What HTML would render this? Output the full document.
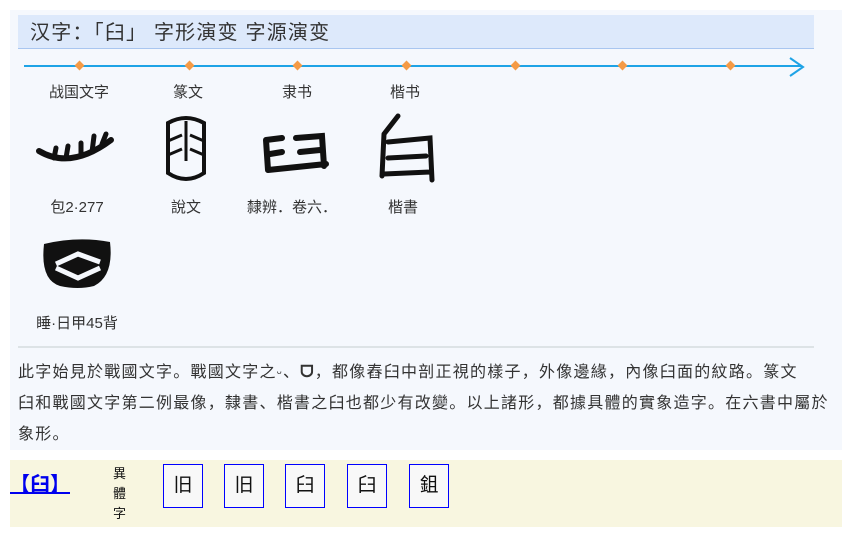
<!DOCTYPE html>
<html><head><meta charset="utf-8"><style>
*{margin:0;padding:0;box-sizing:border-box}
body{width:852px;height:538px;background:#fff;font-family:"Liberation Sans","Noto Sans CJK SC",sans-serif;color:#333;position:relative;overflow:hidden}
.abs{position:absolute}
#panel{left:10px;top:10px;width:832px;height:440px;background:#f5f8fd}
#title{left:18px;top:15px;width:796px;height:34px;background:#dde9fb;border-bottom:1px solid #a9c6f0;font-size:20px;line-height:36px;padding-left:12px;color:#333;letter-spacing:1.2px}
.lbl{font-size:15px;width:110px;text-align:center;color:#333}
.dot{width:7px;height:7px;background:#f59a45;transform:rotate(45deg)}
#txt{left:18px;top:357px;width:810px;font-size:16px;line-height:31px;color:#333;letter-spacing:1.25px;white-space:nowrap}
#band{left:10px;top:460px;width:832px;height:67px;background:#f8f6e0}
.box{top:464px;width:40px;height:44px;border:1px solid #0000ff;background:#f8f8f8;font-size:19px;text-align:center;line-height:42px;color:#111}
</style></head><body>
<div id="panel" class="abs"></div>
<div id="title" class="abs">汉字：「臼」 字形演变 字源演变</div>
<div class="abs" style="left:24px;top:65px;width:778px;height:2px;background:#1ea3e6"></div>
<svg class="abs" style="left:788px;top:56px" width="18" height="22"><path d="M2 2 L15 11 L2 20" fill="none" stroke="#1ea3e6" stroke-width="2"/></svg>
<div class="abs dot" style="left:76px;top:62px"></div>
<div class="abs dot" style="left:186px;top:62px"></div>
<div class="abs dot" style="left:294px;top:62px"></div>
<div class="abs dot" style="left:403px;top:62px"></div>
<div class="abs dot" style="left:512px;top:62px"></div>
<div class="abs dot" style="left:619px;top:62px"></div>
<div class="abs dot" style="left:727px;top:62px"></div>
<div class="abs lbl" style="left:24px;top:81px">战国文字</div>
<div class="abs lbl" style="left:133px;top:81px">篆文</div>
<div class="abs lbl" style="left:242px;top:81px">隶书</div>
<div class="abs lbl" style="left:350px;top:81px">楷书</div>
<svg class="abs" style="left:36px;top:128px" width="82" height="40"><path d="M3 23 Q35 42 75 12" fill="none" stroke="#111" stroke-width="6" stroke-linecap="round"/><path d="M20 20 L18 30 M32 18 L30 30 M45 15 L45 28 M58 8 L56 24 M70 6 L66 16" stroke="#111" stroke-width="5" stroke-linecap="round"/></svg>
<svg class="abs" style="left:160px;top:113px" width="52" height="72"><path d="M8 10 Q26 0 44 10 L44 60 Q26 72 8 60 Z" fill="none" stroke="#111" stroke-width="4"/><path d="M8 28 L22 22 M8 42 L22 36 M44 28 L30 22 M44 42 L30 36 M26 8 L26 48" fill="none" stroke="#111" stroke-width="3"/></svg>
<svg class="abs" style="left:260px;top:130px" width="72" height="48"><path d="M6 10 L22 8 M6 10 L8 40 M10 24 L22 22 M8 40 L66 34 M36 8 L62 6 L64 36 M40 22 L60 20" fill="none" stroke="#111" stroke-width="6" stroke-linecap="round"/></svg>
<svg class="abs" style="left:370px;top:112px" width="68" height="72"><path d="M28 4 L14 22 M14 22 L12 64 M18 30 L60 26 L62 68 M18 46 L56 44 M14 62 L60 60" fill="none" stroke="#111" stroke-width="5" stroke-linecap="round"/></svg>
<svg class="abs" style="left:38px;top:236px" width="78" height="56"><path d="M6 8 Q40 0 72 6 Q76 40 56 50 Q40 54 22 50 Q2 44 6 8 Z" fill="#111"/><path d="M18 28 L40 18 L62 26 M18 32 L40 42 L62 32" fill="none" stroke="#f5f8fd" stroke-width="5"/></svg>
<div class="abs lbl" style="left:22px;top:196px">包2·277</div>
<div class="abs lbl" style="left:131px;top:196px">說文</div>
<div class="abs lbl" style="left:237px;top:196px">隸辨．卷六．</div>
<div class="abs lbl" style="left:348px;top:196px">楷書</div>
<div class="abs lbl" style="left:22px;top:312px">睡·日甲45背</div>
<div class="abs" style="left:18px;top:346px;width:796px;height:2px;background:#dde3e6"></div>
<div id="txt" class="abs">此字始見於戰國文字。戰國文字之<span style="font-size:13px">ᵕ</span>、<b>ᗜ</b>，都像舂臼中剖正視的樣子，外像邊緣，內像臼面的紋路。篆文<br>臼和戰國文字第二例最像，隸書、楷書之臼也都少有改變。以上諸形，都據具體的實象造字。在六書中屬於<br>象形。</div>
<div id="band" class="abs"></div>
<div class="abs" style="left:10px;top:468px;font-size:20px;font-weight:bold;color:#0000ee;text-decoration:underline">【臼】</div>
<div class="abs" style="left:113px;top:464px;width:16px;font-size:13px;line-height:20px;color:#111">異<br>體<br>字</div>
<div class="abs box" style="left:163px">旧</div>
<div class="abs box" style="left:224px">旧</div>
<div class="abs box" style="left:285px">臼</div>
<div class="abs box" style="left:347px">臼</div>
<div class="abs box" style="left:409px">鉏</div>
</body></html>
